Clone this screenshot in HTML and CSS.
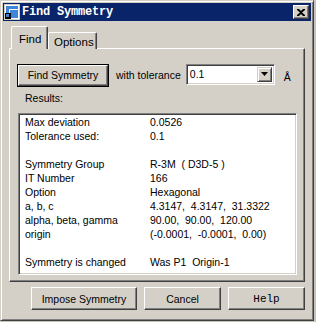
FILE: index.html
```html
<!DOCTYPE html>
<html lang="en">
<head>
  <meta charset="UTF-8" />
  <title>Find Symmetry</title>
  <link rel="stylesheet" href="styles.css">
</head>
<body>
  <div class="window">
    <div class="titlebar">
      <svg class="app-icon" width="16" height="16" viewBox="0 0 16 16">
        <rect x="0" y="0" width="16" height="16" fill="#d4d0c8"/>
        <rect x="1" y="1" width="14" height="14" fill="#fff"/>
        <rect x="2" y="2" width="12" height="12" fill="#3f86d8"/>
        <path d="M5.5 14V5.5H14" stroke="#fff" stroke-width="1" fill="none"/>
        <rect x="1" y="9" width="6" height="6" fill="#000"/>
        <rect x="2" y="10" width="3" height="3" fill="#3f86d8"/>
      </svg>
      <span class="title">Find Symmetry</span>
      <button class="close-btn">
        <svg width="8" height="7" viewBox="0 0 8 7">
          <path d="M0 0h2l2 2 2-2h2v1L5 3.5 8 6v1H6L4 5 2 7H0V6l3-2.5L0 1z" fill="#000"/>
        </svg>
      </button>
    </div>

    <div class="dialog">
      <div class="tabs">
        <div class="tab active">Find</div>
        <div class="tab">Options</div>
      </div>

      <div class="panel">
        <div class="find-row">
          <button class="btn default find-btn">Find Symmetry</button>
          <span class="with-label">with tolerance</span>
          <div class="combo">
            <span class="combo-value">0.1</span>
            <span class="combo-arrow">
              <svg width="7" height="4" viewBox="0 0 7 4"><path d="M0 0h7L3.5 4z" fill="#000"/></svg>
            </span>
          </div>
          <span class="unit">Å</span>
        </div>

        <div class="results-label">Results:</div>

        <div class="listbox">
          <div class="line"><span>Max deviation</span><span>0.0526</span></div>
          <div class="line"><span>Tolerance used:</span><span>0.1</span></div>
          <div class="line"></div>
          <div class="line"><span>Symmetry Group</span><span>R-3M  ( D3D-5 )</span></div>
          <div class="line"><span>IT Number</span><span>166</span></div>
          <div class="line"><span>Option</span><span>Hexagonal</span></div>
          <div class="line"><span>a, b, c</span><span>4.3147,  4.3147,  31.3322</span></div>
          <div class="line"><span>alpha, beta, gamma</span><span>90.00,  90.00,  120.00</span></div>
          <div class="line"><span>origin</span><span>(-0.0001,  -0.0001,  0.00)</span></div>
          <div class="line"></div>
          <div class="line"><span>Symmetry is changed</span><span>Was P1  Origin-1</span></div>
        </div>
      </div>

      <div class="actions">
        <button class="btn impose-btn">Impose Symmetry</button>
        <button class="btn cancel-btn">Cancel</button>
        <button class="btn help-btn">Help</button>
      </div>
    </div>
  </div>
</body>
</html>
```

FILE: styles.css
```css
* {
  box-sizing: border-box;
}
body {
  margin: 0;
  background: #c8c4bc;
  font-family: "Liberation Sans", Arial, sans-serif;
  font-size: 10.5px;
  color: #000;
}
.window {
  width: 314px;
  height: 321px;
  background: #d4d0c8;
  border: 1px solid;
  border-color: #d4d0c8 #404040 #404040 #d4d0c8;
  box-shadow: inset 1px 1px #fff, inset -1px -1px #808080;
  padding: 2px;
  display: flex;
  flex-direction: column;
}
.titlebar {
  height: 18px;
  background: #0a246a;
  display: flex;
  align-items: center;
  padding: 0 2px 0 1px;
}
.app-icon {
  margin-right: 2px;
}
.title {
  flex: 1;
  color: #fff;
  font-family: "Liberation Mono", "Courier New", monospace;
  font-weight: bold;
  font-size: 12px;
  letter-spacing: -0.2px;
}
.close-btn {
  width: 16px;
  height: 14px;
  padding: 0;
  background: #d4d0c8;
  border: 1px solid;
  border-color: #fff #404040 #404040 #fff;
  box-shadow: inset -1px -1px #808080;
  display: flex;
  align-items: center;
  justify-content: center;
}
.dialog {
  flex: 1;
  padding: 6px 6px 0 6px;
  display: flex;
  flex-direction: column;
}
.tabs {
  display: flex;
  align-items: flex-end;
  padding-left: 2px;
  height: 22px;
  position: relative;
  z-index: 1;
  margin-bottom: -1px;
}
.tab {
  height: 17px;
  padding: 2px 6px 0 6px;
  border: 1px solid;
  border-bottom: none;
  border-color: #fff #404040 #fff #fff;
  box-shadow: inset -1px 0 #808080;
  border-radius: 2px 2px 0 0;
  background: #d4d0c8;
  font-size: 11.5px;
  line-height: 14px;
}
.tab.active {
  width: 37px;
  height: 23px;
  padding: 5px 0 0 7px;
}
.tab:not(.active) {
  width: 49px;
  padding-left: 5px;
}
.panel {
  height: 234px;
  border: 1px solid;
  border-color: #fff #404040 #404040 #fff;
  box-shadow: inset -1px -1px #808080;
  padding: 1px;
}
.find-row {
  display: flex;
  align-items: center;
  margin-top: 14px;
  height: 22px;
}
.btn {
  background: #d4d0c8;
  border: 1px solid;
  border-color: #fff #404040 #404040 #fff;
  box-shadow: inset -1px -1px #808080;
  font-family: inherit;
  font-size: 10.5px;
  color: #000;
  padding: 0;
}
.btn.default {
  outline: 1px solid #000;
  outline-offset: 0;
}
.find-btn {
  width: 90px;
  height: 21px;
  margin-left: 7px;
}
.with-label {
  margin-left: 8px;
}
.combo {
  width: 89px;
  height: 21px;
  margin-left: 5px;
  margin-top: -2px;
  background: #fff;
  border: 1px solid;
  border-color: #808080 #fff #fff #808080;
  box-shadow: inset 1px 1px #404040, inset -1px -1px #d4d0c8;
  display: flex;
  align-items: center;
  padding: 2px;
}
.combo-value {
  flex: 1;
  padding-left: 1px;
}
.combo-arrow {
  width: 15px;
  height: 15px;
  background: #d4d0c8;
  border: 1px solid;
  border-color: #d4d0c8 #404040 #404040 #d4d0c8;
  box-shadow: inset 1px 1px #fff, inset -1px -1px #808080;
  display: flex;
  align-items: center;
  justify-content: center;
}
.unit {
  margin-left: 9px;
  margin-top: 3px;
}
.results-label {
  margin-top: 5px;
  padding-left: 14px;
  line-height: 14px;
}
.listbox {
  width: 279px;
  height: 162px;
  margin: 8px 0 0 7px;
  background: #fff;
  border: 1px solid;
  border-color: #808080 #fff #fff #808080;
  box-shadow: inset 1px 1px #404040, inset -1px -1px #d4d0c8;
  padding: 1px 0 0 6px;
}
.line {
  display: grid;
  grid-template-columns: 125px 1fr;
  height: 14px;
  line-height: 14px;
  white-space: pre;
}
.actions {
  display: flex;
  gap: 7px;
  margin-top: 5px;
  padding-left: 22px;
}
.actions .btn {
  height: 23px;
}
.impose-btn {
  width: 106px;
}
.cancel-btn {
  width: 77px;
}
.help-btn {
  width: 77px;
  font-family: "Liberation Mono", "Courier New", monospace;
  font-size: 11px;
}
```
